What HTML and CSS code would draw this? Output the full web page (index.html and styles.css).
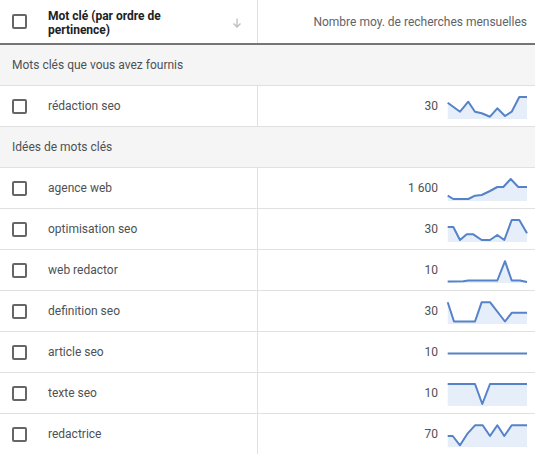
FILE: index.html
```html
<!DOCTYPE html>
<html lang="fr">
<head>
    <meta charset="UTF-8">
    <meta name="viewport" content="width=device-width, initial-scale=1.0">
    <title>Idées de mots clés</title>
    <link rel="stylesheet" href="styles.css">
</head>
<body>
    <div class="kw-table">
        <div class="head-row">
            <div class="kw-cell">
                <span class="check"></span>
                <span class="head-title">Mot clé (par ordre de pertinence)</span>
                <svg class="sort-arrow" width="12" height="12" viewBox="0 0 12 12">
                    <path d="M6 1.5v8.5M2.5 6.5L6 10l3.5-3.5" fill="none" stroke="#bdbdbd" stroke-width="1.3"/>
                </svg>
            </div>
            <div class="vol-cell head-vol">Nombre moy. de recherches mensuelles</div>
        </div>

        <div class="group-row">Mots clés que vous avez fournis</div>

        <div class="row">
            <div class="kw-cell"><span class="check"></span><span class="kw">rédaction seo</span></div>
            <div class="vol-cell">
                <span class="num">30</span>
                <svg class="spark" viewBox="0 0 80 23">
                    <polygon class="area" points="0.7,6.7 13,15.7 21.3,5.7 28,15.7 34.7,17.3 43,20.7 50.3,12.3 58,20 64.7,15.7 72.3,1 80,1 80,23 0.7,23"/>
                    <polyline class="line" points="0.7,6.7 13,15.7 21.3,5.7 28,15.7 34.7,17.3 43,20.7 50.3,12.3 58,20 64.7,15.7 72.3,1 80,1"/>
                </svg>
            </div>
        </div>

        <div class="group-row">Idées de mots clés</div>

        <div class="row">
            <div class="kw-cell"><span class="check"></span><span class="kw">agence web</span></div>
            <div class="vol-cell">
                <span class="num">1 600</span>
                <svg class="spark" viewBox="0 0 80 23">
                    <polygon class="area" points="0.7,17.7 6.3,21 21.3,21 28,17.7 34.7,17 43,13 50.3,9 56.3,9 63.7,1 71.3,9 80,9 80,23 0.7,23"/>
                    <polyline class="line" points="0.7,17.7 6.3,21 21.3,21 28,17.7 34.7,17 43,13 50.3,9 56.3,9 63.7,1 71.3,9 80,9"/>
                </svg>
            </div>
        </div>

        <div class="row">
            <div class="kw-cell"><span class="check"></span><span class="kw">optimisation seo</span></div>
            <div class="vol-cell">
                <span class="num">30</span>
                <svg class="spark" viewBox="0 0 80 23">
                    <polygon class="area" points="0.7,8 6.3,8 13,21 19.7,15.3 26.3,15.3 34.7,21 43,21 50.3,16 57.3,21 64.7,1 72.3,1 80,14.3 80,23 0.7,23"/>
                    <polyline class="line" points="0.7,8 6.3,8 13,21 19.7,15.3 26.3,15.3 34.7,21 43,21 50.3,16 57.3,21 64.7,1 72.3,1 80,14.3"/>
                </svg>
            </div>
        </div>

        <div class="row">
            <div class="kw-cell"><span class="check"></span><span class="kw">web redactor</span></div>
            <div class="vol-cell">
                <span class="num">10</span>
                <svg class="spark" viewBox="0 0 80 23">
                    <polygon class="area" points="0.7,21.5 16.3,21.2 21.3,20.5 50.3,20.5 58,1.2 64.7,20.5 73,20.5 80,22 80,23 0.7,23"/>
                    <polyline class="line" points="0.7,21.5 16.3,21.2 21.3,20.5 50.3,20.5 58,1.2 64.7,20.5 73,20.5 80,22"/>
                </svg>
            </div>
        </div>

        <div class="row">
            <div class="kw-cell"><span class="check"></span><span class="kw">definition seo</span></div>
            <div class="vol-cell">
                <span class="num">30</span>
                <svg class="spark" viewBox="0 0 80 23">
                    <polygon class="area" points="0.7,1.2 7,20.5 28,20.5 34.7,1.2 43,1.2 58,20.5 64.7,11.8 80,11.8 80,23 0.7,23"/>
                    <polyline class="line" points="0.7,1.2 7,20.5 28,20.5 34.7,1.2 43,1.2 58,20.5 64.7,11.8 80,11.8"/>
                </svg>
            </div>
        </div>

        <div class="row">
            <div class="kw-cell"><span class="check"></span><span class="kw">article seo</span></div>
            <div class="vol-cell">
                <span class="num">10</span>
                <svg class="spark" viewBox="0 0 80 23">
                    <polyline class="line" points="0.7,11.5 80,11.5"/>
                </svg>
            </div>
        </div>

        <div class="row">
            <div class="kw-cell"><span class="check"></span><span class="kw">texte seo</span></div>
            <div class="vol-cell">
                <span class="num">10</span>
                <svg class="spark" viewBox="0 0 80 23">
                    <polygon class="area" points="0.7,1 28,1 35.3,21 43,1 80,1 80,23 0.7,23"/>
                    <polyline class="line" points="0.7,1 28,1 35.3,21 43,1 80,1"/>
                </svg>
            </div>
        </div>

        <div class="row">
            <div class="kw-cell"><span class="check"></span><span class="kw">redactrice</span></div>
            <div class="vol-cell">
                <span class="num">70</span>
                <svg class="spark" viewBox="0 0 80 23">
                    <polygon class="area" points="0.7,12 5.7,12 13,21.3 20.7,9.3 28,1.3 35.7,1.3 43,12 50.3,1.3 57.3,12 64.7,1.3 80,1.3 80,23 0.7,23"/>
                    <polyline class="line" points="0.7,12 5.7,12 13,21.3 20.7,9.3 28,1.3 35.7,1.3 43,12 50.3,1.3 57.3,12 64.7,1.3 80,1.3"/>
                </svg>
            </div>
        </div>
    </div>
</body>
</html>
```

FILE: styles.css
```css
body {
    margin: 0;
    padding: 0;
    background: #ffffff;
    font-family: Roboto, "Liberation Sans", Arial, sans-serif;
    font-size: 12px;
    color: #4d5156;
}
.kw-table {
    width: 535px;
}
.head-row,
.row {
    display: grid;
    grid-template-columns: 258px 1fr;
}
.head-row {
    height: 43px;
    border-bottom: 2px solid #757575;
}
.row {
    height: 40px;
    border-bottom: 1px solid #e0e0e0;
}
.kw-cell {
    display: flex;
    align-items: center;
    border-right: 1px solid #e0e0e0;
    padding-left: 12px;
}
.check {
    width: 11px;
    height: 11px;
    border: 2px solid #666666;
    border-radius: 2px;
    flex-shrink: 0;
    margin-right: 21px;
}
.head-title {
    font-weight: bold;
    color: #202124;
    line-height: 14px;
    width: 150px;
    margin-top: 2px;
}
.sort-arrow {
    margin-left: 33px;
    margin-top: 2px;
}
.vol-cell {
    display: flex;
    align-items: center;
    justify-content: flex-end;
    padding-right: 8px;
}
.head-vol {
    color: #5f6368;
    padding-top: 1px;
}
.num {
    margin-right: 9px;
    color: #4d5156;
}
.spark {
    width: 80px;
    height: 23px;
    overflow: visible;
    margin-top: 2px;
}
.spark .area {
    fill: #e6eefa;
}
.spark .line {
    fill: none;
    stroke: #5582c8;
    stroke-width: 2;
    stroke-linejoin: round;
}
.group-row {
    height: 40px;
    line-height: 40px;
    padding-left: 12px;
    background: #f5f5f5;
    border-bottom: 1px solid #e0e0e0;
    color: #4d5156;
}
```
